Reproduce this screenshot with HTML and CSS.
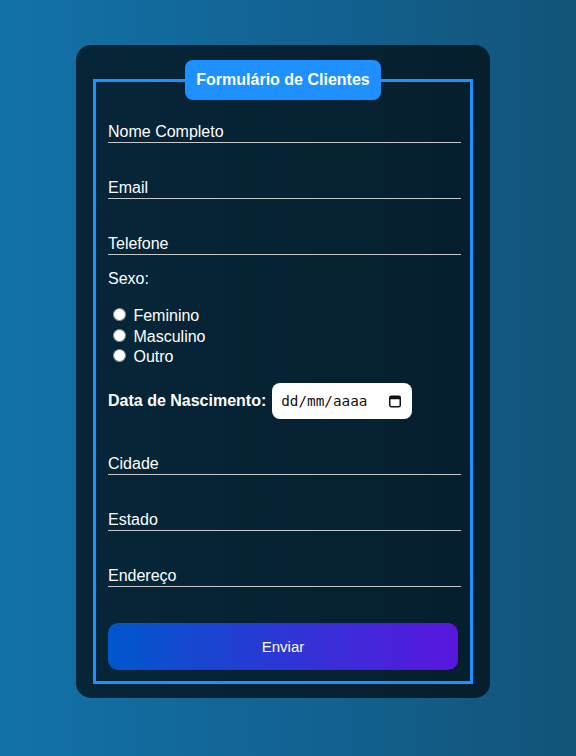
FILE: index.html
```html
<!DOCTYPE html>
<html lang="pt-BR">
<head>
<meta charset="utf-8">
<title>Formulário de Clientes</title>
<link rel="stylesheet" href="styles.css">
</head>
<body>
<div class="card">
  <form class="form">
    <fieldset class="box">
      <legend class="box-title">Formulário de Clientes</legend>
      <input class="line-input first" type="text" placeholder="Nome Completo">
      <input class="line-input" type="email" placeholder="Email">
      <input class="line-input" type="tel" placeholder="Telefone">
      <div class="sexo-label">Sexo:</div>
      <div class="radio-group">
        <label class="radio-option"><input type="radio" name="sexo"> Feminino</label>
        <label class="radio-option"><input type="radio" name="sexo"> Masculino</label>
        <label class="radio-option"><input type="radio" name="sexo"> Outro</label>
      </div>
      <div class="date-row">
        <label class="date-label">Data de Nascimento:</label>
        <div class="date-field">
          <input class="date-text" type="text" placeholder="dd/mm/aaaa">
          <svg class="cal-icon" width="14" height="14" viewBox="0 0 14 14" aria-hidden="true">
            <rect x="1.75" y="2.25" width="10.5" height="10.5" rx="1.5" fill="none" stroke="#111" stroke-width="1.5"/>
            <rect x="1.75" y="2.25" width="10.5" height="3" fill="#111"/>
          </svg>
        </div>
      </div>
      <input class="line-input after-date" type="text" placeholder="Cidade">
      <input class="line-input" type="text" placeholder="Estado">
      <input class="line-input" type="text" placeholder="Endereço">
      <button class="submit" type="button">Enviar</button>
    </fieldset>
  </form>
</div>
</body>
</html>
```
FILE: styles.css
```css
html, body {
  margin: 0;
  padding: 0;
}
body {
  height: 756px;
  box-sizing: border-box;
  padding: 45px 10px 0 0;
  display: flex;
  justify-content: center;
  align-items: flex-start;
  background: linear-gradient(90deg, #1272a8 0%, #12608f 60%, #125478 100%);
  font-family: "Liberation Sans", Arial, sans-serif;
  font-size: 16px;
  color: #fff;
}
.card {
  width: 414px;
  box-sizing: border-box;
  padding: 15px 17px 14px;
  background: rgba(0, 0, 0, 0.65);
  border-radius: 15px;
}
.form {
  margin: 0;
}
.box {
  margin: 0;
  padding: 0 12px 11px;
  border: 3px solid #1e90ff;
  min-width: 0;
}
.box-title {
  margin: 0 auto;
  padding: 11px 11.5px;
  background: #1e90ff;
  color: #fff;
  font-weight: bold;
  font-size: 16px;
  border-radius: 8px;
}
.line-input {
  display: block;
  width: 353px;
  height: 21px;
  box-sizing: border-box;
  margin: 35px 0 0;
  padding: 0;
  border: none;
  border-bottom: 1px solid #c8c8c8;
  background: transparent;
  color: #fff;
  font-family: "Liberation Sans", Arial, sans-serif;
  font-size: 16px;
  outline: none;
}
.line-input::placeholder {
  color: #fff;
  opacity: 1;
}
.line-input.first {
  margin-top: 22px;
}
.line-input.after-date {
  margin-top: 35px;
}
.sexo-label {
  margin-top: 15px;
}
.radio-group {
  margin-top: 17px;
}
.radio-option {
  display: block;
  height: 20.5px;
}
.radio-option input {
  margin: 3px 3px 0 5px;
}
.date-row {
  margin-top: 16px;
  display: flex;
  align-items: center;
}
.date-label {
  font-weight: bold;
  margin-right: 6px;
}
.date-field {
  width: 140px;
  height: 36px;
  box-sizing: border-box;
  padding: 0 10px 0 9px;
  background: #fff;
  border-radius: 8px;
  display: flex;
  align-items: center;
  justify-content: space-between;
}
.date-text {
  width: 92px;
  padding: 0;
  border: none;
  outline: none;
  background: transparent;
  font-family: "DejaVu Sans Mono", "Liberation Mono", monospace;
  font-size: 14.3px;
  color: #111;
}
.date-text::placeholder {
  color: #111;
  opacity: 1;
}
.cal-icon {
  display: block;
  flex: none;
}
.submit {
  display: block;
  width: 100%;
  height: 47px;
  margin-top: 36px;
  border: none;
  border-radius: 10px;
  background: linear-gradient(90deg, #0057cc 0%, #5a16de 100%);
  color: #fff;
  font-family: "Liberation Sans", Arial, sans-serif;
  font-size: 15px;
  cursor: pointer;
}
```
